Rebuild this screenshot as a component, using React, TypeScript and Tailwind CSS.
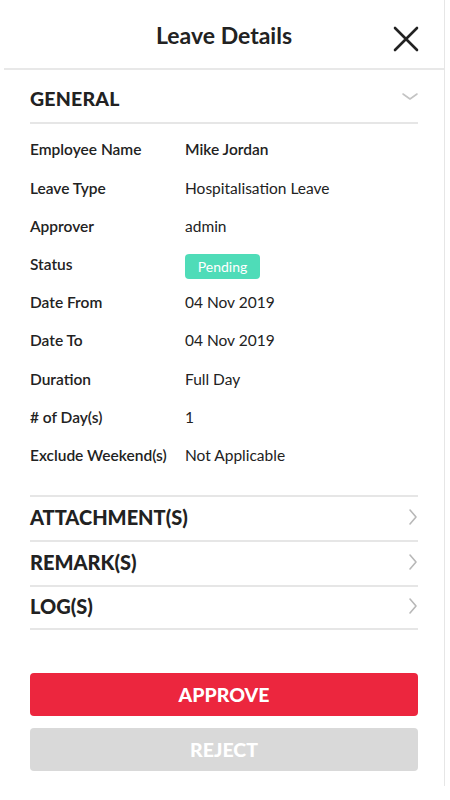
import React from "react";

const rows: [string, string][] = [
  ["Employee Name", "Mike Jordan"],
  ["Leave Type", "Hospitalisation Leave"],
  ["Approver", "admin"],
  ["Status", "__pending__"],
  ["Date From", "04 Nov 2019"],
  ["Date To", "04 Nov 2019"],
  ["Duration", "Full Day"],
  ["# of Day(s)", "1"],
  ["Exclude Weekend(s)", "Not Applicable"],
];

function ChevronRight() {
  return (
    <svg width="10" height="18" viewBox="0 0 10 18" fill="none">
      <path d="M2 2 L8 9 L2 16" stroke="#b8b8b8" strokeWidth="1.6" strokeLinecap="round" strokeLinejoin="round" />
    </svg>
  );
}

export default function App() {
  return (
    <div className="w-[450px] h-[800px] bg-white" style={{ fontFamily: "Lato, 'Open Sans', sans-serif" }}>
      <div className="ml-[4px] w-[441px] h-[786px] border-r border-[#e6e6e6] flex flex-col">
        <div className="h-[70px] border-b-2 border-[#e8e8e8] flex items-center justify-center relative">
          <span className="text-[23px] font-bold text-[#222] mt-[3px]">Leave Details</span>
          <svg className="absolute left-[389px] top-[26px]" width="26" height="26" viewBox="0 0 26 26">
            <path d="M2 2 L24 24 M24 2 L2 24" stroke="#222" strokeWidth="2.6" strokeLinecap="round" />
          </svg>
        </div>
        <div className="pl-[26px] pr-[26px] flex flex-col">
          <div className="h-[54px] pt-[5px] border-b-2 border-[#e6e6e6] flex items-center justify-between">
            <span className="text-[19.5px] font-black text-[#222] tracking-[0.2px]">GENERAL</span>
            <svg width="18" height="10" viewBox="0 0 18 10" className="mr-[-1px] mt-[-4px]">
              <path d="M2 2 L9 7 L16 2" stroke="#c4c4c4" strokeWidth="1.6" fill="none" strokeLinecap="round" strokeLinejoin="round" />
            </svg>
          </div>
          <div className="pt-[7px] pb-[20px] flex flex-col">
            {rows.map(([k, v]) => (
              <div key={k} className="h-[38.2px] flex items-center text-[15.5px] text-[#222]">
                <span className="w-[155px] font-semibold">{k}</span>
                {v === "__pending__" ? (
                  <span className="mt-[3px] h-[25px] w-[75px] rounded-[4px] bg-[#4fdcb8] text-white text-[14px] flex items-center justify-center">
                    Pending
                  </span>
                ) : (
                  <span className={k === "Employee Name" ? "font-semibold" : ""}>{v}</span>
                )}
              </div>
            ))}
          </div>
          {["ATTACHMENT(S)", "REMARK(S)", "LOG(S)"].map((t, i) => (
            <div
              key={t}
              className={"h-[45px] pb-[2px] border-t-2 border-[#e6e6e6] flex items-center justify-between " + (i === 2 ? "border-b-2" : "")}
            >
              <span className="text-[20px] font-black text-[#222]">{t}</span>
              <ChevronRight />
            </div>
          ))}
          <div className="mt-[43px] flex flex-col gap-[12px]">
            <button className="h-[43px] rounded-[4px] bg-[#ec263e] text-white text-[19.5px] font-black">APPROVE</button>
            <button className="h-[43px] rounded-[4px] bg-[#d9d9d9] text-white text-[19.5px] font-black">REJECT</button>
          </div>
        </div>
      </div>
    </div>
  );
}
